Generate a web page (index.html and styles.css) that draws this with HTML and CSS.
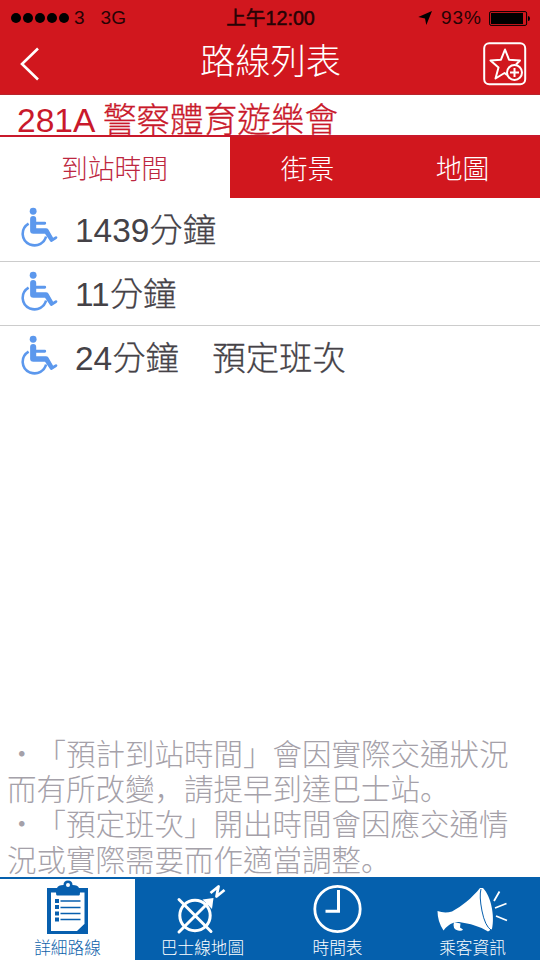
FILE: index.html
```html
<!DOCTYPE html>
<html lang="zh-Hant">
<head>
<meta charset="utf-8">
<title>路線列表</title>
<link rel="stylesheet" href="styles.css">
</head>
<body>
<svg class="defs" aria-hidden="true">
  <symbol id="wheelchair" viewBox="0 0 40 42">
    <circle cx="12.800" cy="4.400" r="3.600"/>
    <path d="M9.600 12.500q0-3.200 3.200-3.200t3.200 3.200V15.500h9q1.500 0 1.500 1.500t-1.500 1.500H16v3.700h10.200q1.800 0 2.600 1.400l5 8.800 2.200-1.500q1.500-.6 2.200.7.500 1.300-.9 2.100l-4.600 2.900q-1.400.6-2.200-.8L25.300 28H13q-3.400 0-3.400-3z"/>
    <path class="wheel" d="M8 17.500C-.9 23-.1 35.500 9.500 39.500c8.500 2.800 15.200-2 16.900-8.500"/>
  </symbol>
</svg>
<div class="screen">
  <header>
    <div class="status">
      <div class="carrier"><div class="dots"><i></i><i></i><i></i><i></i><i></i></div><span class="three">3</span><span>3G</span></div>
      <div class="clock">上午12:00</div>
      <div class="power">
        <svg class="loc" viewBox="0 0 14 14"><path d="M14 0 8.300 14 7 7.500.300 6z"/></svg>
        <span>93%</span>
        <svg class="battery" viewBox="0 0 41 15"><rect x=".6" y=".6" width="37" height="13.800" rx="1.500" fill="none" stroke="#000"/><rect x="2" y="2" width="32" height="11"/><path d="M39 5q2 0 2 2.500T39 10z"/></svg>
      </div>
    </div>
    <div class="nav">
      <svg class="back" viewBox="0 0 20 34"><path d="M18 1.500 2 17l16 15.500"/></svg>
      <h1>路線列表</h1>
      <svg class="fav" viewBox="0 0 44 44"><rect x="1.200" y="1.200" width="41" height="41" rx="5"/><path d="M24 33 21.500 31 12.500 36.500 15.500 25.500 7.500 18.500 18 17.700 22 7.500 26 17.700 37 18.500 33 22.500"/><circle cx="31.500" cy="30.500" r="7.500"/><path d="M31.500 26v9M27 30.500h9"/></svg>
    </div>
  </header>
  <div class="route">281A <span>警察體育遊樂會</span></div>
  <nav class="tabs"><div class="on">到站時間</div><div>街景</div><div>地圖</div></nav>
  <main>
    <div class="row"><svg><use href="#wheelchair"/></svg><p>1439<span>分鐘</span></p></div>
    <div class="row"><svg><use href="#wheelchair"/></svg><p>11<span>分鐘</span></p></div>
    <div class="row"><svg><use href="#wheelchair"/></svg><p>24<span>分鐘　預定班次</span></p></div>
  </main>
  <div class="notes">
    <p>・「預計到站時間」會因實際交通狀況</p>
    <p>而有所改變<span class="low" lang="zh-Hans">，</span>請提早到達巴士站<span class="low" lang="zh-Hans">。</span></p>
    <p>・「預定班次」開出時間會因應交通情</p>
    <p>況或實際需要而作適當調整<span class="low" lang="zh-Hans">。</span></p>
  </div>
  <footer>
    <div class="item on">
      <svg viewBox="0 0 135 60"><g transform="translate(0 -3)"><path fill="#075fae" d="M47 10h10q1-3 6.500-3 0-4.500 4.500-4.500t4.500 4.500Q78 7 79 10h9v46H47z"/><circle cx="68" cy="7" r="2" fill="#fff"/><path fill="#fff" d="M51 14.500h5q0 3 1 3h22q1 0 1-3h4.500V46L77 53H51z"/><path fill="#075fae" d="M77 53.500l7.500-7.500v7.500zM55 21h4v4h-4zM55 27h4v4h-4zM55 33.500h4v4h-4zM55 39.500h4v4h-4z"/><path stroke="#075fae" stroke-width="1.500" d="M60.500 23h20M60.500 29.500h20M60.500 35.500h20M60.500 41.500h20"/></g></svg>
      <span>詳細路線</span>
    </div>
    <div class="item">
      <svg viewBox="0 0 135 60"><g fill="none" stroke="#fff"><circle cx="60" cy="34.500" r="15.200" stroke-width="3"/><path stroke-width="3" stroke-linecap="round" d="m44 18.500 32 32M44 51 73 22"/><path stroke-width="2.800" stroke-linejoin="round" d="m75.500 12 8-6.500-2 10 8-6.500"/></g><path fill="#fff" d="m67.500 18.500 11-1.500-1.500 11z"/></svg>
      <span>巴士線地圖</span>
    </div>
    <div class="item">
      <svg viewBox="0 0 135 60"><g fill="none" stroke="#fff"><circle cx="67.500" cy="28" r="22.700" stroke-width="2.800"/><path d="M68.500 9v21.300h-13" stroke-width="3"/></g></svg>
      <span>時間表</span>
    </div>
    <div class="item">
      <svg viewBox="0 0 135 60"><g fill="#fff" transform="translate(0 -3)"><path d="M32.500 33q7 2.500 14.500.5C57 28 67 20 75 10l3 0c8 8 12 28 9 41l-4 2.500c-8-5-18-8-29-9.500q-4-.5-6 1-5 1.500-9.500 7.500-6-9-6-19.500z"/><path d="M49 44q-2 7 4 8.500 4 1 5-1l-3-2 .5-4z"/><path d="M76 11q-2 7 1 22t9 19" fill="none" stroke="#075fae" stroke-width="1"/><path d="m89 23 5.500-9.500M90 30l11.500-4.500M91 38l11 4.500" stroke="#fff" stroke-width="1.800"/></g></svg>
      <span>乘客資訊</span>
    </div>
  </footer>
</div>
</body>
</html>
```

FILE: styles.css
```css
* { box-sizing: border-box; }
body, h1, p { margin: 0; }
body { font-family: "Liberation Sans", "Noto Sans CJK TC", sans-serif; font-weight: 300; background: #fff; text-spacing-trim: space-all; }
svg { display: block; flex: none; }
.defs { position: absolute; width: 0; height: 0; }
.screen { width: 540px; height: 960px; display: flex; flex-direction: column; overflow: hidden; }
header { height: 95px; background: #d1171e; border-bottom: 1px solid #b8252c; }
.status { height: 36px; display: grid; grid-template-columns: 1fr auto 1fr; align-items: center; padding: 0 10px 0 11px; font-size: 19px; color: #260305; }
.carrier { display: flex; align-items: center; }
.dots { display: flex; gap: 2px; margin-right: 5px; }
.dots i { width: 10px; height: 10px; border-radius: 50%; background: #000; }
.three { margin-right: 16px; }
.clock { font-size: 19.700px; font-weight: 400; -webkit-text-stroke: .5px #260305; line-height: 36px; }
.power { display: flex; justify-content: flex-end; align-items: center; letter-spacing: 1px; }
.loc { width: 14px; height: 14px; margin-right: 9px; }
.battery { width: 41px; height: 15px; margin-left: 7px; }
.nav { height: 58px; display: flex; justify-content: space-between; align-items: center; padding: 0 13px 0 20px; }
.nav svg { fill: none; stroke: #fff; }
.back { width: 20px; height: 34px; margin-top: -3px; stroke-width: 2.600; }
.nav h1 { font-size: 35.300px; font-weight: 300; line-height: 50px; color: #fff; margin-left: 18px; padding-bottom: 6px; }
.fav { width: 44px; height: 44px; margin-top: -3px; stroke-width: 2; stroke-linejoin: round; }
.route { height: 42px; padding-left: 17px; font-size: 33.600px; line-height: 51px; color: #c9192b; border-bottom: 2px solid #c9192b; white-space: nowrap; }
.tabs { height: 61px; display: grid; grid-template-columns: 230px 155px 155px; font-size: 26.800px; line-height: 66px; text-align: center; color: #fff; background: #d1171e; }
.tabs div { height: 61px; }
.tabs .on { color: #bd2740; background: #fff; padding-right: 1px; }
.row { height: 64px; display: flex; align-items: center; padding-left: 21px; border-bottom: 1px solid #ccc; }
.row:last-child { border-bottom-color: transparent; }
.row svg { width: 38px; height: 42px; margin-top: -6px; fill: #5c98ed; }
.wheel { fill: none; stroke: #5c98ed; stroke-width: 2.700; }
.row p { margin-left: 16px; padding-top: 2px; font-size: 33.400px; line-height: 61px; color: #454247; white-space: pre; }
.row span, .route span { -webkit-text-stroke: .3px; }
.notes { margin-top: auto; padding-left: 7px; font-family: "Noto Sans CJK TC", sans-serif; font-size: 29.500px; line-height: 35.300px; color: #a5a1a9; white-space: nowrap; padding-bottom: 1px; }
.low { font-family: "Noto Sans CJK SC", sans-serif; }
footer { height: 83px; flex: none; display: grid; grid-template-columns: repeat(4, 135px); background: #0560ad; }
.item { text-align: center; color: #fff; font-size: 16.700px; line-height: 20px; padding-top: 1px; border-top: 2px solid #0560ad; }
.item.on { background: #fff; color: #0d62aa; }
.item svg { width: 135px; height: 60px; margin-top: 1px; margin-bottom: -2px; overflow: visible; }
.item span { display: block; }
```
